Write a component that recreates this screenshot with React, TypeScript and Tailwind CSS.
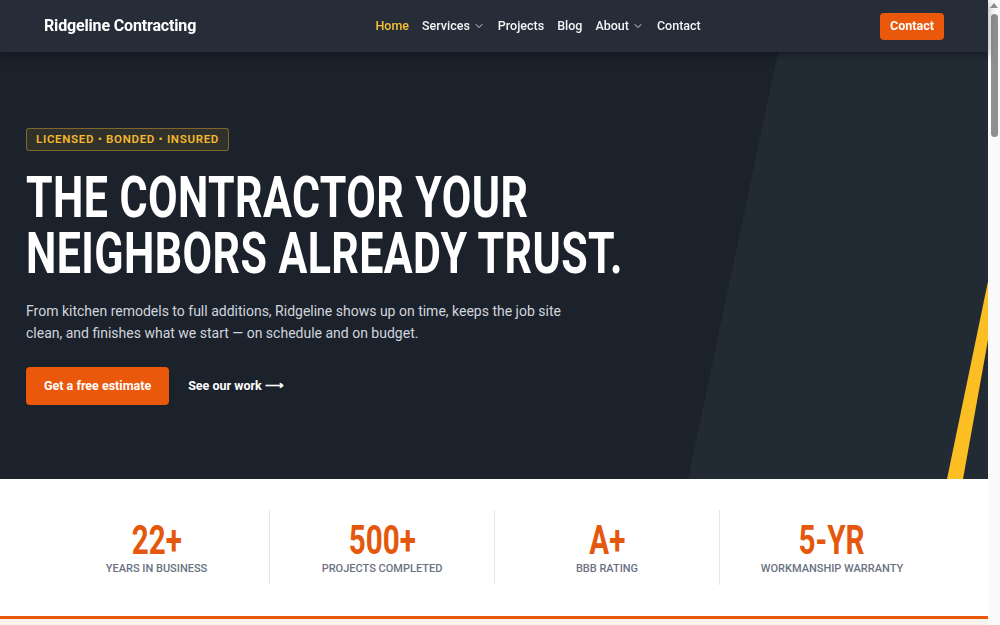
import React from 'react';
import { ChevronDown } from 'lucide-react';

const navLinks = [
    { label: 'Home', active: true },
    { label: 'Services', menu: true },
    { label: 'Projects' },
    { label: 'Blog' },
    { label: 'About', menu: true },
    { label: 'Contact' },
];

const stats = [
    { value: '22+', label: 'Years in business' },
    { value: '500+', label: 'Projects completed' },
    { value: 'A+', label: 'BBB rating' },
    { value: '5-YR', label: 'Workmanship warranty' },
];

const Header: React.FC = () => (
    <header className="sticky top-0 z-20 flex h-[52px] items-center justify-between bg-[#262d38] px-[44px] shadow-[0_3px_8px_rgba(0,0,0,0.35)]">
        <a className="text-[16px] font-bold tracking-[-0.01em] text-white">Ridgeline Contracting</a>
        <nav className="flex items-center gap-[13px] text-[12.5px] font-medium">
            {navLinks.map(link => (
                <a
                    key={link.label}
                    className={`flex items-center gap-[3px] ${link.active ? 'text-[#f6c033]' : 'text-gray-100'}`}
                >
                    {link.label}
                    {link.menu && <ChevronDown size={12} strokeWidth={2} className="text-gray-300" />}
                </a>
            ))}
        </nav>
        <button className="h-[27px] rounded-[4px] bg-[#ea580c] px-[10px] text-[12.5px] font-bold text-white">
            Contact
        </button>
    </header>
);

const Hero: React.FC = () => (
    <section className="relative h-[427px] overflow-hidden bg-[#1b222c]">
        {/* diagonal panel + caution stripe */}
        <svg className="absolute inset-0 h-full w-full" viewBox="0 0 988 427" preserveAspectRatio="none">
            <polygon points="778,0 988,0 988,427 688,427" fill="#222a34" />
            <polygon points="992,210 1002,210 963,427 947,427" fill="#fbbf24" />
        </svg>

        <div className="relative pl-[26px] pt-[74px]">
            <div className="inline-flex h-[23px] items-center rounded-[3px] border border-[#f5b82e]/40 bg-[#f5b82e]/10 px-[9px] text-[11.5px] font-semibold tracking-[0.06em] text-[#f5b82e]">
                LICENSED • BONDED • INSURED
            </div>

            <h1 className="mt-[18px] origin-left scale-x-[0.74] whitespace-nowrap text-[58px] font-bold leading-[56px] tracking-[0.01em] text-white">
                THE CONTRACTOR YOUR
                <br />
                NEIGHBORS ALREADY TRUST.
            </h1>

            <p className="mt-[19px] text-[14px] leading-[22px] text-gray-300">
                From kitchen remodels to full additions, Ridgeline shows up on time, keeps the job site
                <br />
                clean, and finishes what we start — on schedule and on budget.
            </p>

            <div className="mt-[23px] flex items-center gap-[19px]">
                <button className="h-[38px] rounded-[4px] bg-[#ea580c] px-[18px] text-[12.5px] font-bold text-white">
                    Get a free estimate
                </button>
                <a className="text-[12.5px] font-bold text-white">See our work ⟶</a>
            </div>
        </div>
    </section>
);

const Stats: React.FC = () => (
    <section className="border-b-[3px] border-[#ea580c] bg-white px-[44px] py-[31px]">
        <div className="grid grid-cols-4">
            {stats.map((s, i) => (
                <div
                    key={s.label}
                    className={`flex h-[75px] flex-col items-center justify-center ${i > 0 ? 'border-l border-gray-200' : ''}`}
                >
                    <div className="scale-x-[0.74] text-[40px] font-bold leading-[48px] text-[#e4580d]">
                        {s.value}
                    </div>
                    <div className="mt-[-4px] text-[11px] font-medium uppercase text-gray-500">
                        {s.label}
                    </div>
                </div>
            ))}
        </div>
    </section>
);

const Scrollbar: React.FC = () => (
    <aside className="fixed right-0 top-0 flex h-screen w-[12px] flex-col items-center bg-[#fafafa]">
        <div className="mt-[3px] h-0 w-0 border-x-[4px] border-b-[5px] border-x-transparent border-b-[#8f8f8f]" />
        <div className="mt-[6px] h-[123px] w-[7px] rounded-full bg-[#8f8f8f]" />
    </aside>
);

export default function App() {
    return (
        <div className="min-h-[1500px] bg-[#f7f3ee]" style={{ fontFamily: '"Roboto", "Liberation Sans", sans-serif' }}>
            <div className="w-[988px]">
                <Header />
                <Hero />
                <Stats />
            </div>
            <Scrollbar />
        </div>
    );
}
